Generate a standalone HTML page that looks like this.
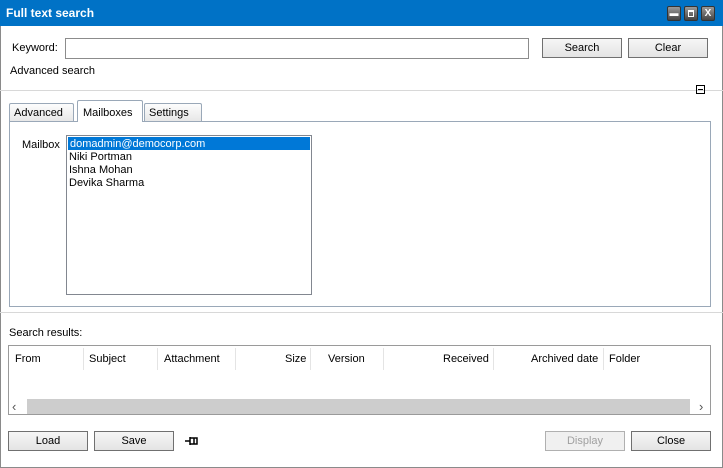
<!DOCTYPE html>
<html><head><style>
*{margin:0;padding:0;box-sizing:border-box}
body{width:723px;height:468px;background:#fff;font-family:"Liberation Sans",sans-serif;font-size:11px;color:#000;position:relative;overflow:hidden}
.a{position:absolute}
.btn{position:absolute;height:20px;border:1px solid #707070;background:linear-gradient(#f6f6f6,#e4e4e4);text-align:center;line-height:19px;font-size:11px}
.tab{position:absolute;border:1px solid #9aa8b8;border-bottom:none;background:linear-gradient(#fdfdfd,#e6e6e6);font-size:11px;padding-left:4px;line-height:18px;border-radius:2px 2px 0 0}
.hd{position:absolute;top:353px;font-size:11px}
.sep{position:absolute;top:348px;width:1px;height:22px;background:#e4e4e4}
</style></head><body>
<div class="a" style="left:0;top:0;width:723px;height:468px;border:1px solid #8a8a8a;border-top:none"></div>
<div class="a" style="left:0;top:0;width:723px;height:26px;background:#0072c6;"></div>
<div class="a" style="left:6px;top:6px;color:#fff;font-weight:bold;font-size:12px">Full text search</div>
<div class="a" style="left:667px;top:6px;width:14px;height:15px;background:linear-gradient(#999,#444);border:1px solid #333;border-radius:2px;color:#fff;font-size:9px;text-align:center;line-height:13px">▬</div>
<div class="a" style="left:684px;top:6px;width:14px;height:15px;background:linear-gradient(#999,#444);border:1px solid #333;border-radius:2px"><div class="a" style="left:3px;top:3px;width:6px;height:7px;border:1px solid #fff;border-top-width:2px"></div></div>
<div class="a" style="left:701px;top:6px;width:14px;height:15px;background:linear-gradient(#999,#444);border:1px solid #333;border-radius:2px;color:#fff;font-size:10px;font-weight:bold;text-align:center;line-height:13px">X</div>

<div class="a" style="left:12px;top:42px">Keyword:</div>
<div class="a" style="left:65px;top:38px;width:464px;height:21px;border:1px solid #8c8c8c"></div>
<div class="btn" style="left:542px;top:38px;width:80px">Search</div>
<div class="btn" style="left:628px;top:38px;width:80px">Clear</div>
<div class="a" style="left:10px;top:65px">Advanced search</div>
<div class="a" style="left:0;top:90px;width:723px;height:1px;background:#d8d8d8"></div>
<div class="a" style="left:696px;top:85px;width:9px;height:9px;border:1px solid #000"><div class="a" style="left:1px;top:3px;width:5px;height:1px;background:#000"></div></div>

<div class="tab" style="left:9px;top:103px;width:65px;height:19px">Advanced</div>
<div class="tab" style="left:144px;top:103px;width:58px;height:19px">Settings</div>
<div class="a" style="left:9px;top:121px;width:702px;height:186px;border:1px solid #9aa8b8"></div>
<div class="tab" style="left:77px;top:100px;width:66px;height:22px;background:#fff;padding-left:5px;line-height:24px">Mailboxes</div>
<div class="a" style="left:22px;top:139px">Mailbox</div>
<div class="a" style="left:66px;top:135px;width:246px;height:160px;border:1px solid #828790"></div>
<div class="a" style="left:68px;top:137px;width:242px;height:13px;background:#0078d7"></div>
<div class="a" style="left:70px;top:138px;line-height:13px;color:#fff">domadmin@democorp.com</div>
<div class="a" style="left:69px;top:151px;line-height:13px">Niki Portman<br>Ishna Mohan<br>Devika Sharma</div>
<div class="a" style="left:0;top:312px;width:723px;height:1px;background:#d8d8d8"></div>

<div class="a" style="left:9px;top:327px">Search results:</div>
<div class="a" style="left:8px;top:345px;width:703px;height:70px;border:1px solid #9a9a9a"></div>
<div class="hd" style="left:15px">From</div>
<div class="sep" style="left:83px"></div>
<div class="hd" style="left:89px">Subject</div>
<div class="sep" style="left:157px"></div>
<div class="hd" style="left:164px">Attachment</div>
<div class="sep" style="left:235px"></div>
<div class="hd" style="left:285px">Size</div>
<div class="sep" style="left:310px"></div>
<div class="hd" style="left:328px">Version</div>
<div class="sep" style="left:383px"></div>
<div class="hd" style="left:443px">Received</div>
<div class="sep" style="left:493px"></div>
<div class="hd" style="left:531px">Archived date</div>
<div class="sep" style="left:603px"></div>
<div class="hd" style="left:609px">Folder</div>
<div class="a" style="left:27px;top:399px;width:663px;height:15px;background:#cdcdcd"></div>
<div class="a" style="left:12px;top:399px;font-size:13px;color:#555">‹</div>
<div class="a" style="left:699px;top:399px;font-size:13px;color:#555">›</div>

<div class="btn" style="left:8px;top:431px;width:80px">Load</div>
<div class="btn" style="left:94px;top:431px;width:80px">Save</div>
<svg class="a" style="left:184px;top:434px" width="16" height="14"><path d="M1 7H6M6 3V11M6 4H13V10H6M10 4V10" stroke="#000" stroke-width="1.5" fill="none"/></svg>
<div class="btn" style="left:545px;top:431px;width:80px;color:#a0a0a0;border-color:#b0b0b0;background:#f0f0f0">Display</div>
<div class="btn" style="left:631px;top:431px;width:80px">Close</div>
</body></html>
